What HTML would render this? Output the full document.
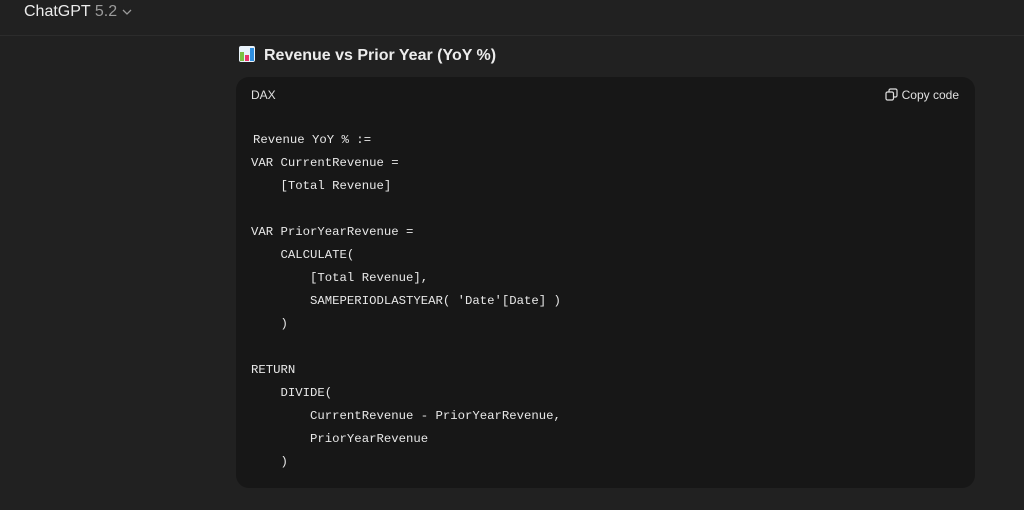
<!DOCTYPE html>
<html><head><meta charset="utf-8"><style>
html,body{margin:0;padding:0;background:#212121;width:1024px;height:510px;overflow:hidden;font-family:"Liberation Sans",sans-serif;color:#ececec}
.top{position:absolute;left:0;top:0;width:1024px;height:35px;border-bottom:1px solid #2c2c2c}
.brand{position:absolute;left:24px;top:3px;font-size:16px;color:#ececec}
.brand span{color:#9b9b9b}
.h{position:absolute;left:239px;top:46px;font-size:16px;font-weight:bold;color:#ececec}
.ico{display:inline-block;width:16px;height:16px;vertical-align:-2px;margin-right:9px;background:#eaf3fb;border-radius:2px;position:relative}
.ico i{position:absolute;bottom:1px;width:4px}
.code{position:absolute;left:236px;top:77px;width:739px;height:411px;background:#171717;border-radius:13px}
.lang{position:absolute;left:15px;top:11px;font-size:12px;color:#e0e0e0}
.copy{position:absolute;right:16px;top:11px;font-size:12px;color:#e0e0e0}
pre{position:absolute;left:15px;top:52px;margin:0;font-family:"Liberation Mono",monospace;font-size:12.3px;line-height:23px;color:#e8e8e8}
</style></head><body>
<div class="top"><div class="brand">ChatGPT <span>5.2 <svg width="10" height="8" viewBox="0 0 10 8"><path d="M1 2l4 4 4-4" stroke="#9b9b9b" stroke-width="1.3" fill="none"/></svg></span></div></div>
<div class="h"><span class="ico"><i style="left:1px;height:9px;background:#7bc043"></i><i style="left:6px;height:6px;background:#e8336b"></i><i style="left:11px;height:13px;background:#2f8fe0"></i></span>Revenue vs Prior Year (YoY %)</div>
<div class="code">
<div class="lang">DAX</div>
<div class="copy"><svg width="13" height="13" viewBox="0 0 13 13" style="vertical-align:-2px;margin-right:4px"><rect x="1" y="4" width="7.5" height="8" rx="1.5" stroke="#e0e0e0" fill="none" stroke-width="1.2"/><path d="M4 3.5V2.5a1.5 1.5 0 0 1 1.5-1.5h5A1.5 1.5 0 0 1 12 2.5v5A1.5 1.5 0 0 1 10.5 9H9" stroke="#e0e0e0" fill="none" stroke-width="1.2"/></svg>Copy code</div>
<pre><span style="margin-left:2px">Revenue YoY % :=</span>
VAR CurrentRevenue =
    [Total Revenue]

VAR PriorYearRevenue =
    CALCULATE(
        [Total Revenue],
        SAMEPERIODLASTYEAR( 'Date'[Date] )
    )

RETURN
    DIVIDE(
        CurrentRevenue - PriorYearRevenue,
        PriorYearRevenue
    )</pre>
</div>
</body></html>
